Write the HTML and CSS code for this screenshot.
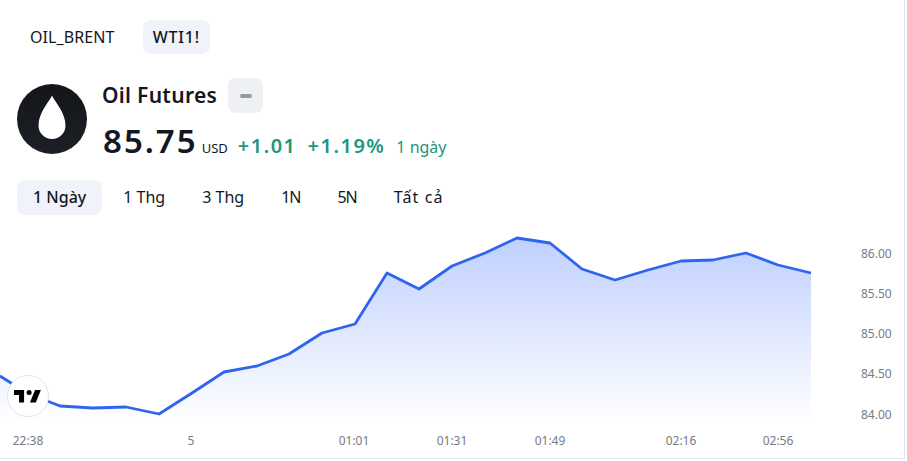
FILE: index.html
```html
<!DOCTYPE html>
<html lang="vi">
<head>
<meta charset="utf-8">
<title>Oil Futures</title>
<link rel="stylesheet" href="styles.css">
</head>
<body>
<main class="widget">
  <nav class="tabs">
    <button class="tab">OIL_BRENT</button>
    <button class="tab is-active">WTI1!</button>
  </nav>
  <section class="quote">
    <svg class="logo" viewBox="0 0 70 70" aria-hidden="true">
      <defs>
        <linearGradient id="logoFill" x1="0" y1="0" x2="0" y2="1">
          <stop offset="0" stop-color="#131519"/>
          <stop offset="1" stop-color="#1c2024"/>
        </linearGradient>
      </defs>
      <circle cx="35" cy="35" r="35" fill="url(#logoFill)"/>
      <path d="M35 11.500C33 17 21.500 28 21.500 41.500A13.500 13.500 0 0 0 48.500 41.500C48.500 28 37 17 35 11.500Z" fill="#fff"/>
    </svg>
    <div class="quote-body">
      <div class="title-row">
        <h1 class="title">Oil Futures</h1>
        <span class="status"><span class="status-dash"></span></span>
      </div>
      <div class="price-row">
        <span class="price">85.75</span>
        <span class="currency">USD</span>
        <span class="change">+1.01</span>
        <span class="change">+1.19%</span>
        <span class="period">1 ngày</span>
      </div>
    </div>
  </section>
  <nav class="ranges">
    <button class="range is-active">1 Ngày</button>
    <button class="range">1 Thg</button>
    <button class="range">3 Thg</button>
    <button class="range range-short">1N</button>
    <button class="range range-short">5N</button>
    <button class="range range-wide">Tất cả</button>
  </nav>
  <div class="chart">
    <svg class="plot" viewBox="0 0 904 236" width="904" height="236">
      <defs>
        <linearGradient id="area" gradientUnits="userSpaceOnUse" x1="0" y1="16" x2="0" y2="200">
          <stop offset="0" stop-color="#2962ff" stop-opacity="0.3"/>
          <stop offset="1" stop-color="#2962ff" stop-opacity="0"/>
        </linearGradient>
      </defs>
      <path fill="url(#area)" d="M0 155L27 172L60 185L93 187L126 186L159 193L192 172L224 151L257 145L289 133L322 112L355 103L387 52L419 68L452 45L485 32L517 17L550 22L582 48L615 59L648 49L681 40L713 39L746 32L778 44L811 52L811 200L0 200Z"/>
      <polyline class="line" points="0,155 27,172 60,185 93,187 126,186 159,193 192,172 224,151 257,145 289,133 322,112 355,103 387,52 419,68 452,45 485,32 517,17 550,22 582,48 615,59 648,49 681,40 713,39 746,32 778,44 811,52"/>
      <text class="axis" x="861" y="37">86.00</text>
      <text class="axis" x="861" y="77">85.50</text>
      <text class="axis" x="861" y="117">85.00</text>
      <text class="axis" x="861" y="157">84.50</text>
      <text class="axis" x="861" y="198">84.00</text>
      <text class="axis mid" x="28" y="224">22:38</text>
      <text class="axis mid" x="191" y="224">5</text>
      <text class="axis mid" x="354" y="224">01:01</text>
      <text class="axis mid" x="452" y="224">01:31</text>
      <text class="axis mid" x="550" y="224">01:49</text>
      <text class="axis mid" x="681" y="224">02:16</text>
      <text class="axis mid" x="778" y="224">02:56</text>
    </svg>
    <svg class="tv-badge" viewBox="0 0 42 42" aria-hidden="true">
      <circle cx="21" cy="21" r="20.500" fill="#fff" stroke="#e0e3eb"/>
      <g transform="translate(5.320 9.960) scale(0.84)">
        <path d="M14 6H2V12H8V21H14Z" fill="#000"/>
        <circle cx="20" cy="9" r="3" fill="#000"/>
        <path d="M28 21H21L27 6H34Z" fill="#000"/>
      </g>
    </svg>
  </div>
</main>
</body>
</html>
```

FILE: styles.css
```css
* { box-sizing: border-box; }
html, body { margin: 0; padding: 0; background: #fff; }
body {
  width: 907px;
  height: 461px;
  overflow: hidden;
  font-family: "Noto Sans", "Liberation Sans", sans-serif;
  color: #131722;
}
.widget {
  width: 905px;
  height: 459px;
  border-right: 1px solid #e0e3eb;
  border-bottom: 1px solid #e0e3eb;
  display: flex;
  flex-direction: column;
}
button {
  font: inherit;
  color: inherit;
  border: 0;
  background: none;
  cursor: pointer;
}
.tabs {
  display: flex;
  gap: 18px;
  padding: 20px 0 0 20px;
}
.tab {
  height: 34px;
  padding: 0 10px;
  border-radius: 8px;
  font-size: 16px;
  letter-spacing: 0.1px;
}
.tab.is-active { background: #f0f3fa; font-weight: 500; letter-spacing: 0.8px; }
.quote {
  display: flex;
  gap: 15px;
  padding: 24px 0 0 17px;
}
.logo { width: 70px; height: 70px; margin-top: 6px; flex: none; }
.quote-body { display: flex; flex-direction: column; }
.title-row { display: flex; align-items: center; gap: 11px; height: 35px; }
.title { margin: 0; font-size: 21px; font-weight: 600; line-height: 35px; letter-spacing: 0.3px; }
.status {
  width: 35px;
  height: 35px;
  border-radius: 8px;
  background: #eff0f3;
  display: flex;
  align-items: center;
  justify-content: center;
}
.status-dash { width: 12px; height: 4px; border-radius: 2px; background: #9598a1; }
.price-row { display: flex; align-items: baseline; margin-top: 6px; height: 44px; padding-left: 1px; }
.price { font-size: 33px; font-weight: 600; line-height: 44px; letter-spacing: 2px; margin-right: 4px; }
.currency { font-size: 13px; margin-right: 10px; }
.change { font-size: 20px; font-weight: 600; letter-spacing: 1.500px; color: #1e967c; margin-right: 11px; }
.period { font-size: 16px; color: #1e967c; }
.ranges {
  display: flex;
  gap: 5px;
  padding: 17px 0 0 17px;
}
.range {
  height: 35px;
  padding: 0 16px 2px;
  border-radius: 8px;
  font-size: 16px;
}
.range.is-active { background: #f0f3fa; font-weight: 500; }
.range-short { letter-spacing: -1px; }
.range-wide { letter-spacing: 1.100px; }
.chart {
  position: relative;
  margin-top: 6px;
  height: 236px;
}
.plot { display: block; }
.line { fill: none; stroke: #2e64ee; stroke-width: 2.800; stroke-linejoin: round; }
.axis { font-size: 12px; fill: #787b86; font-family: "Noto Sans", "Liberation Sans", sans-serif; }
.axis.mid { text-anchor: middle; }
.tv-badge {
  position: absolute;
  left: 7px;
  top: 154px;
  width: 42px;
  height: 42px;
}
```
